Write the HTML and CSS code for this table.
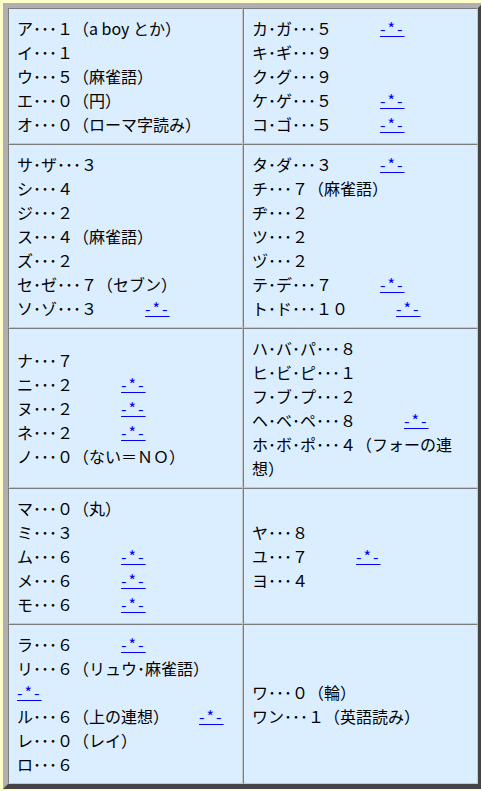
FILE: index.html
```html
<!DOCTYPE html>
<html lang="ja">
<head>
<meta charset="utf-8">
<title>数字語呂</title>
<link rel="stylesheet" href="styles.css">
</head>
<body>
<table class="kana">
<tr>
<td>ア･･･１（a boy とか）<br>イ･･･１<br>ウ･･･５（麻雀語）<br>エ･･･０（円）<br>オ･･･０（ローマ字読み）</td>
<td>カ･ガ･･･５　　　<a href="#">-*-</a><br>キ･ギ･･･９<br>ク･グ･･･９<br>ケ･ゲ･･･５　　　<a href="#">-*-</a><br>コ･ゴ･･･５　　　<a href="#">-*-</a></td>
</tr>
<tr>
<td>サ･ザ･･･３<br>シ･･･４<br>ジ･･･２<br>ス･･･４（麻雀語）<br>ズ･･･２<br>セ･ゼ･･･７（セブン）<br>ソ･ゾ･･･３　　　<a href="#">-*-</a></td>
<td>タ･ダ･･･３　　　<a href="#">-*-</a><br>チ･･･７（麻雀語）<br>ヂ･･･２<br>ツ･･･２<br>ヅ･･･２<br>テ･デ･･･７　　　<a href="#">-*-</a><br>ト･ド･･･１０　　　<a href="#">-*-</a></td>
</tr>
<tr>
<td>ナ･･･７<br>ニ･･･２　　　<a href="#">-*-</a><br>ヌ･･･２　　　<a href="#">-*-</a><br>ネ･･･２　　　<a href="#">-*-</a><br>ノ･･･０（ない＝ＮＯ）</td>
<td>ハ･バ･パ･･･８<br>ヒ･ビ･ピ･･･１<br>フ･ブ･プ･･･２<br>ヘ･ベ･ペ･･･８　　　<a href="#">-*-</a><br>ホ･ボ･ポ･･･４（フォーの連想）</td>
</tr>
<tr>
<td>マ･･･０（丸）<br>ミ･･･３<br>ム･･･６　　　<a href="#">-*-</a><br>メ･･･６　　　<a href="#">-*-</a><br>モ･･･６　　　<a href="#">-*-</a></td>
<td>ヤ･･･８<br>ユ･･･７　　　<a href="#">-*-</a><br>ヨ･･･４</td>
</tr>
<tr>
<td>ラ･･･６　　　<a href="#">-*-</a><br>リ･･･６（リュウ･麻雀語）　　　<a href="#">-*-</a><br>ル･･･６（上の連想）　　<a class="far" href="#">-*-</a><br>レ･･･０（レイ）<br>ロ･･･６</td>
<td>ワ･･･０（輪）<br>ワン･･･１（英語読み）</td>
</tr>
</table>
</body>
</html>
```
FILE: styles.css
```css
html {
  overflow: hidden;
}
body {
  margin: 3px 0 0 3px;
  background: #ffffcc;
  font-family: "Noto Sans CJK JP", sans-serif;
  font-size: 16px;
  line-height: 24px;
  color: #000;
}
.kana {
  width: 480px;
  border-collapse: separate;
  border-spacing: 0;
  border: 5px solid;
  border-color: #b0b0b0 #444444 #444444 #b0b0b0;
  background: #a0a0a0;
}
.kana td {
  width: 50%;
  vertical-align: middle;
  padding: 7px 8px;
  background: #daeeff;
  border: 1px solid;
  border-color: #7c7c7c #c8c8c8 #c8c8c8 #7c7c7c;
}
.kana a {
  color: #0000ff;
  text-decoration: underline;
  letter-spacing: 2px;
}
.kana a.far {
  margin-left: 6px;
}
```
